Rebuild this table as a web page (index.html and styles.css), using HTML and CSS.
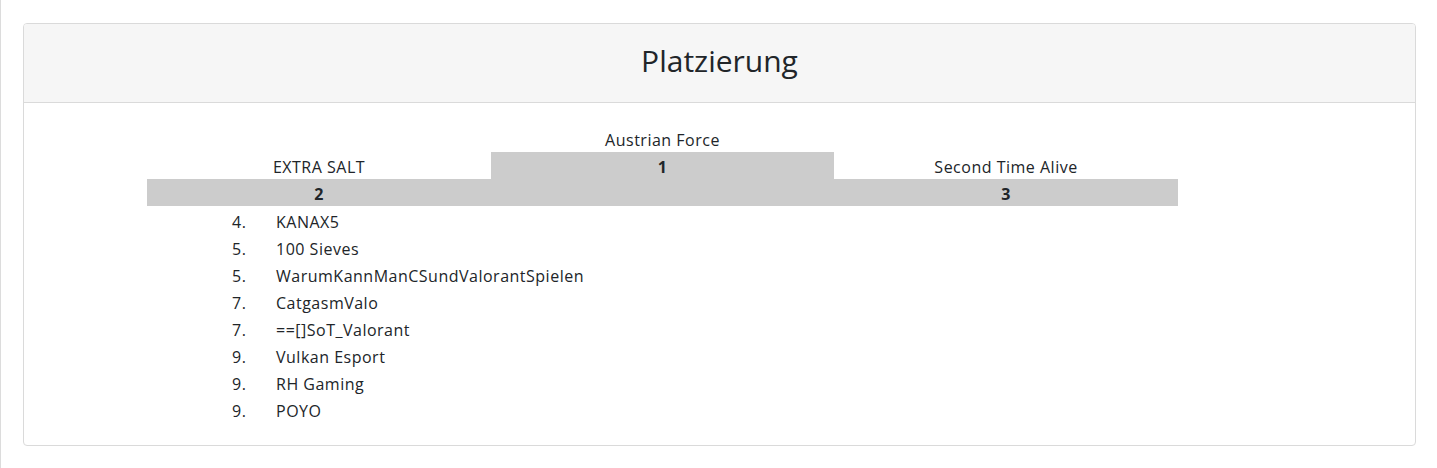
FILE: index.html
```html
<!DOCTYPE html>
<html lang="de">
<head>
<meta charset="utf-8">
<title>Platzierung</title>
<link rel="stylesheet" href="styles.css">
</head>
<body>
<div class="page">
  <div class="card">
    <div class="card-header"><h2 class="title">Platzierung</h2></div>
    <div class="card-body">
      <div class="podium">
        <div class="cell"></div>
        <div class="cell">Austrian Force</div>
        <div class="cell"></div>
        <div class="cell">EXTRA SALT</div>
        <div class="cell step bold">1</div>
        <div class="cell">Second Time Alive</div>
        <div class="cell step bold">2</div>
        <div class="cell step"></div>
        <div class="cell step bold">3</div>
      </div>
      <div class="ranks">
        <span class="num">4.</span><span>KANAX5</span>
        <span class="num">5.</span><span>100 Sieves</span>
        <span class="num">5.</span><span>WarumKannManCSundValorantSpielen</span>
        <span class="num">7.</span><span>CatgasmValo</span>
        <span class="num">7.</span><span>==[]SoT_Valorant</span>
        <span class="num">9.</span><span>Vulkan Esport</span>
        <span class="num">9.</span><span>RH Gaming</span>
        <span class="num">9.</span><span>POYO</span>
      </div>
    </div>
  </div>
</div>
</body>
</html>
```
FILE: styles.css
```css
html, body {
  margin: 0;
  padding: 0;
  background: #fff;
}
body {
  font-family: "Open Sans", "Noto Sans", sans-serif;
  font-size: 16px;
  color: #212529;
}
.page {
  border-left: 1px solid #dcdcdc;
  padding: 23px 21px 22px 22px;
  min-height: 468px;
  box-sizing: border-box;
}
.card {
  border: 1px solid #dadada;
  border-radius: 4px;
  overflow: hidden;
}
.card-header {
  background: #f6f6f6;
  border-bottom: 1px solid #dadada;
  height: 78px;
  display: flex;
  align-items: center;
  justify-content: center;
}
.title {
  margin: 0 0 4px;
  font-weight: 400;
  font-size: 30px;
  color: #212529;
  line-height: 1;
}
.card-body {
  padding: 22px 0 21px 123px;
  letter-spacing: 0.5px;
}
.podium {
  display: grid;
  grid-template-columns: 344px 343px 344px;
  grid-auto-rows: 27px;
  width: 1031px;
}
.cell {
  display: flex;
  align-items: center;
  justify-content: center;
  padding-top: 2px;
}
.step {
  background: #cccccc;
}
.bold {
  font-weight: 700;
}
.ranks {
  display: grid;
  grid-template-columns: 44px auto;
  grid-auto-rows: 27px;
  align-items: center;
  padding-left: 85px;
  padding-top: 2px;
  justify-content: start;
}
```
